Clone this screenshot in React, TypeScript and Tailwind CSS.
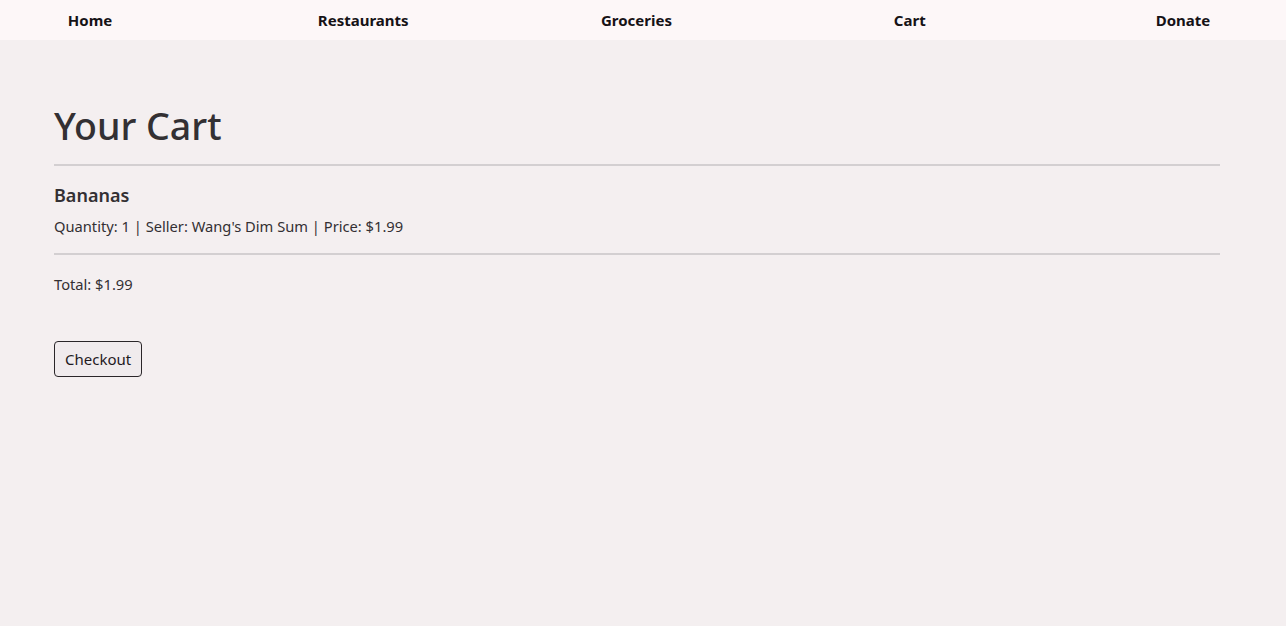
import React from "react";

export default function App() {
  const nav = ["Home", "Restaurants", "Groceries", "Cart", "Donate"];
  return (
    <div
      className="min-h-[626px] w-full bg-[#f4eff0] text-[#333033]"
      style={{ fontFamily: '"Noto Sans", "Open Sans", sans-serif' }}
    >
      <nav className="h-10 bg-[#fdf7f8] flex items-center justify-between pr-[13px]">
        {nav.map((n) => (
          <a key={n} className="w-[180px] text-center font-bold text-[15px] text-[#161216]">
            {n}
          </a>
        ))}
      </nav>
      <main className="px-[54px] pt-[58px]">
        <h1 className="text-[37.5px] font-medium leading-[56px]">Your Cart</h1>
        <hr className="mt-[10px] border-0 h-[2px] bg-[#d3cfd1] mr-[12px]" />
        <div className="mt-[16px]">
          <div className="text-[18px] font-semibold leading-[26px]">Bananas</div>
          <div className="mt-[8px] text-[14.7px] leading-[20px]">
            Quantity: 1 | Seller: Wang's Dim Sum | Price: $1.99
          </div>
        </div>
        <hr className="mt-[17px] border-0 h-[2px] bg-[#d3cfd1] mr-[12px]" />
        <div className="mt-[19px] text-[14.7px] leading-[20px]">Total: $1.99</div>
        <button className="mt-[47px] h-9 px-[10px] border border-[#2a2629] rounded-[4px] bg-[#f0ebed] text-[15px] text-[#1f1a1e]">
          Checkout
        </button>
      </main>
    </div>
  );
}
